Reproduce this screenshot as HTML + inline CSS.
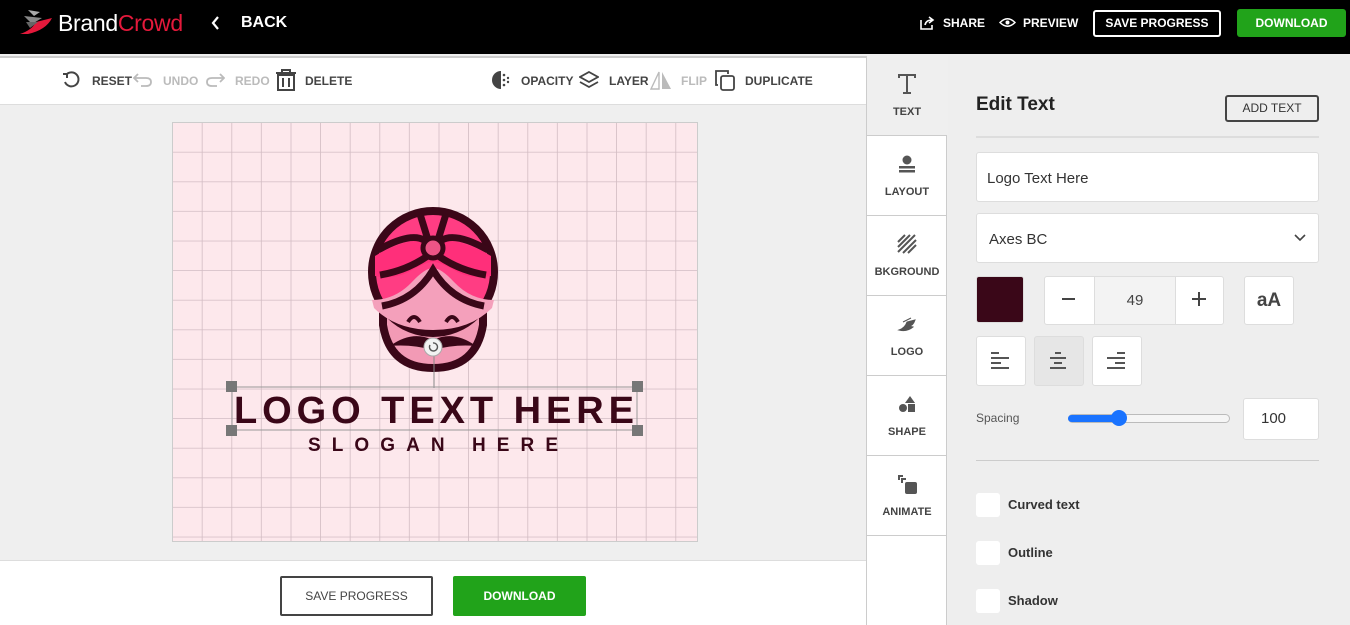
<!DOCTYPE html>
<html><head><meta charset="utf-8"><style>
*{box-sizing:border-box;margin:0;padding:0}
body{width:1350px;height:625px;overflow:hidden;font-family:"Liberation Sans",sans-serif;background:#efefef;position:relative}
.abs{position:absolute}
.hdr{left:0;top:0;width:1350px;height:54px;background:#000}
.w{color:#fff;font-weight:bold;font-size:14px}
.tb{left:0;top:56px;width:866px;height:49px;background:#fff;border-bottom:1px solid #ddd;border-top:2px solid #ccc}
.tl{font-size:12px;font-weight:bold;color:#444;top:74px}
.g{color:#bbb}
.side{left:866px;top:56px;width:81px;height:569px;background:#fff;border-left:1px solid #ccc;border-right:1px solid #ccc}
.tab{position:absolute;left:0;width:80px;height:80px;border-bottom:1px solid #ccc;text-align:center;font-size:11px;font-weight:bold;color:#444}
.tab span{position:absolute;left:0;right:0;top:50px}
.tab svg{position:absolute;left:30px;top:18px}
.rp{left:948px;top:56px;width:402px;height:569px;background:#eeeeee}
.box{position:absolute;background:#fff;border:1px solid #ddd;border-radius:3px}
</style></head><body>
<div class="abs hdr"></div>
<svg class="abs" style="left:18px;top:8px" width="40" height="30" viewBox="0 0 40 30"><path d="M10 2 L22 4 L16 8 Z" fill="#aaa"/><path d="M6 8 L24 10 L14 16 Z" fill="#888"/><path d="M2 26 Q14 22 18 14 L34 10 Q28 22 10 26 Z" fill="#e4193b"/><path d="M8 14 L20 14 L12 20 Z" fill="#666"/></svg>
<div class="abs" style="left:58px;top:10px;font-size:23px;color:#fff;letter-spacing:-0.3px">Brand<span style="color:#e4193b">Crowd</span></div>
<svg class="abs" style="left:210px;top:15px" width="10" height="16"><path d="M8 2 L3 8 L8 14" stroke="#fff" stroke-width="2.2" fill="none"/></svg>
<div class="abs w" style="left:241px;top:14px;font-size:16px">BACK</div>
<svg class="abs" style="left:920px;top:16px" width="15" height="14"><path d="M1 4 V13 H12 V9" stroke="#fff" stroke-width="1.6" fill="none"/><path d="M5 9 Q6 4 12 4 M9 1 L13 4 L9 7" stroke="#fff" stroke-width="1.6" fill="none"/></svg>
<div class="abs w" style="left:943px;top:16px;font-size:12px">SHARE</div>
<svg class="abs" style="left:999px;top:17px" width="17" height="11"><path d="M1 5.5 Q8.5 -2 16 5.5 Q8.5 13 1 5.5Z" stroke="#fff" stroke-width="1.5" fill="none"/><circle cx="8.5" cy="5.5" r="2" fill="#fff"/></svg>
<div class="abs w" style="left:1023px;top:16px;font-size:12px">PREVIEW</div>
<div class="abs w" style="left:1093px;top:10px;width:128px;height:27px;border:2px solid #fff;border-radius:3px;font-size:12px;text-align:center;line-height:23px">SAVE PROGRESS</div>
<div class="abs w" style="left:1237px;top:9px;width:109px;height:28px;background:#21a31a;border-radius:3px;font-size:12px;text-align:center;line-height:28px">DOWNLOAD</div>

<div class="abs tb"></div>
<svg class="abs" style="left:62px;top:71px" width="18" height="18"><path d="M4 4 A7 7 0 1 1 3 11" stroke="#444" stroke-width="2" fill="none"/><path d="M1 3 L5 3 L5 7" stroke="#444" stroke-width="2" fill="none"/></svg>
<div class="abs tl" style="left:92px">RESET</div>
<svg class="abs" style="left:133px;top:72px" width="20" height="16"><path d="M5 2 L1 6 L5 10 M1 6 H13 Q18 6 18 10 Q18 14 13 14 H8" stroke="#bbb" stroke-width="1.8" fill="none"/></svg>
<div class="abs tl g" style="left:163px">UNDO</div>
<svg class="abs" style="left:205px;top:72px" width="20" height="16"><path d="M15 2 L19 6 L15 10 M19 6 H7 Q2 6 2 10 Q2 14 7 14 H12" stroke="#bbb" stroke-width="1.8" fill="none"/></svg>
<div class="abs tl g" style="left:235px">REDO</div>
<svg class="abs" style="left:275px;top:69px" width="22" height="22"><path d="M1 4 H21 M7 4 V1 H15 V4" stroke="#444" stroke-width="2" fill="none"/><rect x="3" y="6" width="16" height="15" stroke="#444" stroke-width="2" fill="none"/><path d="M8 9 V18 M14 9 V18" stroke="#444" stroke-width="2"/></svg>
<div class="abs tl" style="left:305px">DELETE</div>
<svg class="abs" style="left:491px;top:70px" width="20" height="20"><path d="M10 1 A9 9 0 0 0 10 19Z" fill="#444"/><circle cx="13" cy="5" r="1.3" fill="#444"/><circle cx="13" cy="10" r="1.3" fill="#444"/><circle cx="13" cy="15" r="1.3" fill="#444"/><circle cx="17" cy="8" r="1.2" fill="#444"/><circle cx="17" cy="12" r="1.2" fill="#444"/></svg>
<div class="abs tl" style="left:521px">OPACITY</div>
<svg class="abs" style="left:579px;top:71px" width="20" height="18"><path d="M10 1 L19 6 L10 11 L1 6Z M1 11 L10 16 L19 11" stroke="#444" stroke-width="1.8" fill="none"/></svg>
<div class="abs tl" style="left:609px">LAYER</div>
<svg class="abs" style="left:650px;top:70px" width="22" height="20"><path d="M9 2 L9 19 L1 19Z" stroke="#bbb" stroke-width="1.4" fill="none"/><path d="M12 2 L12 19 L21 19Z" fill="#bbb"/></svg>
<div class="abs tl g" style="left:681px">FLIP</div>
<svg class="abs" style="left:714px;top:69px" width="22" height="22"><path d="M4 16 H2 V2 H14 V5" stroke="#444" stroke-width="1.8" fill="none"/><rect x="7" y="7" width="13" height="14" rx="2" stroke="#444" stroke-width="1.8" fill="none"/></svg>
<div class="abs tl" style="left:745px">DUPLICATE</div>

<svg class="abs" style="left:172px;top:122px" width="526" height="420">
<defs><pattern id="gr" x="1" y="1" width="29.6" height="29.6" patternUnits="userSpaceOnUse"><path d="M29.6 0 V29.6 M0 29.6 H29.6" stroke="#d2bcc3" stroke-width="1.6"/></pattern></defs>
<rect x="0.5" y="0.5" width="525" height="419" fill="#fde8ec" stroke="#ccc"/>
<rect x="1" y="1" width="524" height="418" fill="url(#gr)"/>
<g transform="translate(-172,-122)">
<path d="M383 308 L383 325 Q390 368 433 368 Q476 368 483 325 L483 308Z" fill="#f29ab5" stroke="#3a0718" stroke-width="8"/>
<circle cx="433" cy="272" r="61" fill="#ff3d83" stroke="#3a0718" stroke-width="8"/>
<path d="M375 256 Q405 238 433 240 Q461 238 491 256 L491 276 Q470 280 454 270 Q440 262 433 262 Q426 262 412 270 Q396 280 375 276Z" fill="#ff2f7a"/>
<path d="M372 300 Q395 300 412 282 Q425 268 433 268 Q441 268 454 282 Q471 300 494 300 L492 308 Q470 330 433 330 Q396 330 374 308Z" fill="#f4a0bb"/>
<path d="M378 250 Q410 232 424 240 M488 250 Q456 232 442 240" stroke="#3a0718" stroke-width="7" fill="none"/>
<path d="M380 275 Q410 270 433 252 Q456 270 486 275" stroke="#3a0718" stroke-width="7" fill="none"/>
<path d="M382 306 Q415 300 433 270 Q451 300 484 306" stroke="#3a0718" stroke-width="7" fill="none"/>
<path d="M420 214 L428 240 M446 214 L438 240" stroke="#3a0718" stroke-width="7"/>
<circle cx="433" cy="248" r="10" fill="#ec5486" stroke="#3a0718" stroke-width="5"/>
<path d="M408 322 Q414 312 420 322 M446 322 Q452 312 458 322" stroke="#3a0718" stroke-width="4" fill="none"/>
<path d="M390 346 Q412 330 433 340 Q454 330 476 346 Q455 344 433 350 Q411 344 390 346Z" fill="#3a0718"/>
<line x1="434" y1="356" x2="434" y2="388" stroke="#888" stroke-width="1"/>
<circle cx="433" cy="347" r="9" fill="#f2f2f2" stroke="#aaa"/>
<path d="M430 345 A4 4 0 1 0 433 343" stroke="#555" stroke-width="1.4" fill="none"/>
<rect x="232" y="387" width="405" height="43" fill="none" stroke="#999" stroke-width="1"/>
<rect x="226" y="381" width="11" height="11" fill="#777"/><rect x="632" y="381" width="11" height="11" fill="#777"/>
<rect x="226" y="425" width="11" height="11" fill="#777"/><rect x="632" y="425" width="11" height="11" fill="#777"/>
<text x="434" y="423" text-anchor="middle" font-family="Liberation Sans" font-weight="bold" font-size="38" fill="#3a0718" textLength="400">LOGO TEXT HERE</text>
<text x="433" y="451" text-anchor="middle" font-family="Liberation Sans" font-weight="bold" font-size="19" fill="#3a0718" textLength="250">SLOGAN HERE</text>
</g></svg>

<div class="abs" style="left:0;top:560px;width:866px;height:65px;background:#fff;border-top:1px solid #ddd"></div>
<div class="abs" style="left:280px;top:576px;width:153px;height:40px;border:2px solid #444;border-radius:2px;font-size:12px;color:#444;text-align:center;line-height:36px">SAVE PROGRESS</div>
<div class="abs w" style="left:453px;top:576px;width:133px;height:40px;background:#21a31a;border-radius:2px;font-size:12px;text-align:center;line-height:40px">DOWNLOAD</div>

<div class="abs side">
<div class="tab" style="top:0;background:#efefef"><svg width="20" height="20"><path d="M2 4 V1 H18 V4 M10 1 V19 M6 19 H14" stroke="#555" stroke-width="2" fill="none"/></svg><span>TEXT</span></div>
<div class="tab" style="top:80px"><svg width="20" height="20"><circle cx="10" cy="6" r="4.5" fill="#555"/><rect x="2" y="12" width="16" height="2.5" fill="#555"/><rect x="2" y="16" width="16" height="2.5" fill="#555"/></svg><span>LAYOUT</span></div>
<div class="tab" style="top:160px"><svg width="20" height="20"><path d="M1 8 L8 1 M1 13 L13 1 M1 18 L18 1 M6 19 L19 6 M11 19 L19 11" stroke="#555" stroke-width="2"/></svg><span>BKGROUND</span></div>
<div class="tab" style="top:240px"><svg width="20" height="20"><path d="M2 16 Q8 14 10 8 L18 6 Q16 12 12 12 L16 13 Q10 18 2 16Z M6 8 L14 4" fill="#555" stroke="#555"/></svg><span>LOGO</span></div>
<div class="tab" style="top:320px"><svg width="20" height="20"><path d="M13 2 L18 9 H8Z" fill="#555"/><circle cx="6" cy="14" r="4" fill="#555"/><rect x="11" y="10" width="7" height="8" fill="#555"/></svg><span>SHAPE</span></div>
<div class="tab" style="top:400px"><svg width="20" height="22"><path d="M2 6 V2 H6 M5 9 V5 H9" stroke="#555" stroke-width="2" fill="none"/><rect x="8" y="8" width="12" height="12" rx="2" fill="#555"/></svg><span>ANIMATE</span></div>
</div>

<div class="abs rp"></div>
<div class="abs" style="left:976px;top:94px;font-size:19px;font-weight:bold;color:#222">Edit Text</div>
<div class="abs" style="left:1225px;top:95px;width:94px;height:27px;border:2px solid #444;border-radius:3px;font-size:12px;color:#333;text-align:center;line-height:23px">ADD TEXT</div>
<div class="abs" style="left:976px;top:136px;width:343px;height:2px;background:#ddd"></div>
<div class="box" style="left:976px;top:152px;width:343px;height:50px;padding:17px 10px;font-size:15px;color:#333">Logo Text Here</div>
<div class="box" style="left:976px;top:213px;width:343px;height:50px;padding:17px 12px;font-size:15px;color:#333">Axes BC</div>
<svg class="abs" style="left:1294px;top:234px" width="12" height="8"><path d="M1 1 L6 6 L11 1" stroke="#444" stroke-width="1.6" fill="none"/></svg>
<div class="abs" style="left:976px;top:276px;width:48px;height:47px;background:#3a0718;border-radius:3px;border:1px solid #ddd"></div>
<div class="box" style="left:1044px;top:276px;width:180px;height:49px"></div>
<div class="abs" style="left:1094px;top:276px;width:82px;height:49px;background:#f3f3f3;border:1px solid #ddd;text-align:center;line-height:47px;font-size:15px;color:#444">49</div>
<div class="abs" style="left:1062px;top:298px;width:13px;height:2px;background:#444"></div>
<div class="abs" style="left:1192px;top:298px;width:14px;height:2px;background:#444"></div>
<div class="abs" style="left:1198px;top:292px;width:2px;height:14px;background:#444"></div>
<div class="box" style="left:1244px;top:276px;width:50px;height:49px;text-align:center;line-height:47px;font-size:19px;font-weight:bold;color:#444">aA</div>
<div class="box" style="left:976px;top:336px;width:50px;height:50px"></div>
<div class="box" style="left:1034px;top:336px;width:50px;height:50px;background:#e6e6e6"></div>
<div class="box" style="left:1092px;top:336px;width:50px;height:50px"></div>
<svg class="abs" style="left:991px;top:352px" width="20" height="18"><path d="M0 1 H8 M0 6 H18 M0 11 H10 M0 16 H18" stroke="#555" stroke-width="2"/></svg>
<svg class="abs" style="left:1049px;top:352px" width="20" height="18"><path d="M6 1 H12 M1 6 H17 M5 11 H13 M1 16 H17" stroke="#555" stroke-width="2"/></svg>
<svg class="abs" style="left:1107px;top:352px" width="20" height="18"><path d="M10 1 H18 M0 6 H18 M8 11 H18 M0 16 H18" stroke="#555" stroke-width="2"/></svg>
<div class="abs" style="left:976px;top:411px;font-size:12px;color:#555">Spacing</div>
<div class="abs" style="left:1068px;top:414px;width:162px;height:9px;border:1px solid #bbb;border-radius:5px;background:#f5f5f5"></div>
<div class="abs" style="left:1068px;top:415px;width:52px;height:7px;border-radius:4px;background:#1a73ff"></div>
<div class="abs" style="left:1111px;top:410px;width:16px;height:16px;border-radius:50%;background:#1a73ff"></div>
<div class="box" style="left:1243px;top:398px;width:76px;height:42px;padding-left:17px;line-height:40px;font-size:15px;color:#333">100</div>
<div class="abs" style="left:976px;top:460px;width:343px;height:1px;background:#ccc"></div>
<div class="abs" style="left:976px;top:493px;width:24px;height:24px;background:#fff;border-radius:3px"></div>
<div class="abs" style="left:1008px;top:497px;font-size:13px;font-weight:bold;color:#333">Curved text</div>
<div class="abs" style="left:976px;top:541px;width:24px;height:24px;background:#fff;border-radius:3px"></div>
<div class="abs" style="left:1008px;top:545px;font-size:13px;font-weight:bold;color:#333">Outline</div>
<div class="abs" style="left:976px;top:589px;width:24px;height:24px;background:#fff;border-radius:3px"></div>
<div class="abs" style="left:1008px;top:593px;font-size:13px;font-weight:bold;color:#333">Shadow</div>
</body></html>
